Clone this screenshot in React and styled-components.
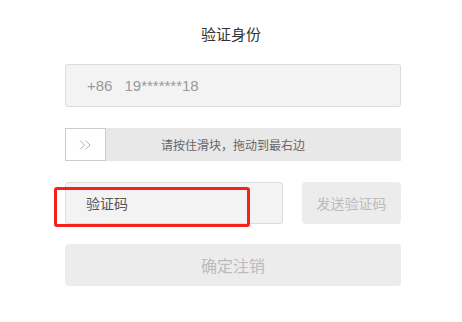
import React from "react"
import styled, { createGlobalStyle } from "styled-components"

const Global = createGlobalStyle`
  body {
    margin: 0;
    background: #fff;
    font-family: "Liberation Sans", "Noto Sans CJK SC", sans-serif;
  }
`

const Page = styled.div`
  width: 462px;
  height: 322px;
  display: flex;
  flex-direction: column;
  align-items: center;
`

const Title = styled.div`
  margin-top: 25px;
  height: 20px;
  line-height: 20px;
  font-size: 15px;
  color: #333;
`

const Form = styled.div`
  width: 336px;
  margin-top: 19px;
  margin-left: 4px;
  display: flex;
  flex-direction: column;
`

const Field = styled.div`
  box-sizing: border-box;
  height: 43px;
  display: flex;
  align-items: center;
  background: #f3f3f3;
  border: 1px solid #dcdcdc;
  border-radius: 3px;
  color: #999;
  font-size: 15px;
`

const Prefix = styled.span`
  padding-left: 21px;
  padding-right: 10px;
  border-right: 1px solid #f5f5f5;
  line-height: 41px;
`

const Phone = styled.span`
  padding-left: 1px;
`

const Slider = styled.div`
  position: relative;
  height: 33px;
  margin-top: 21px;
  background: #e8e8e8;
  display: flex;
  align-items: center;
  justify-content: center;
  font-size: 12px;
  color: #666;
`

const Handle = styled.div`
  position: absolute;
  left: 0;
  top: 0;
  box-sizing: border-box;
  width: 41px;
  height: 33px;
  background: #fff;
  border: 1px solid #ccc;
  display: flex;
  align-items: center;
  justify-content: center;
`

const Row = styled.div`
  display: flex;
  gap: 19px;
  margin-top: 21px;
`

const CodeWrap = styled.div`
  position: relative;
  flex: 1;
`

const CodeInput = styled(Field)`
  height: 42px;
  color: #555;
  font-size: 14px;
  padding-left: 20px;
`

const Highlight = styled.div`
  position: absolute;
  left: -11px;
  top: 5px;
  width: 196px;
  height: 40px;
  box-sizing: border-box;
  border: 3px solid #f5221b;
  border-radius: 3px;
`

const Button = styled.div`
  box-sizing: border-box;
  height: ${(p) => p.h || 42}px;
  width: ${(p) => (p.w ? p.w + "px" : "auto")};
  display: flex;
  align-items: center;
  justify-content: center;
  background: #ececec;
  border-radius: 4px;
  color: #bbb;
  font-size: ${(p) => p.size || 14}px;
  margin-top: ${(p) => p.mt || 0}px;
`

export default function App() {
  return (
    <>
      <Global />
      <Page>
        <Title>验证身份</Title>
        <Form>
          <Field>
            <Prefix>+86</Prefix>
            <Phone>19*******18</Phone>
          </Field>
          <Slider>
            <Handle>
              <svg width="13" height="10" viewBox="0 0 13 10" fill="none" stroke="#aaa" strokeWidth="0.9">
                <path d="M1 0.5 L5.5 5 L1 9.5" />
                <path d="M6.5 0.5 L11 5 L6.5 9.5" />
              </svg>
            </Handle>
            请按住滑块，拖动到最右边
          </Slider>
          <Row>
            <CodeWrap>
              <CodeInput>验证码</CodeInput>
              <Highlight />
            </CodeWrap>
            <Button w={99}>发送验证码</Button>
          </Row>
          <Button h={42} size={16} mt={20}>确定注销</Button>
        </Form>
      </Page>
    </>
  )
}
